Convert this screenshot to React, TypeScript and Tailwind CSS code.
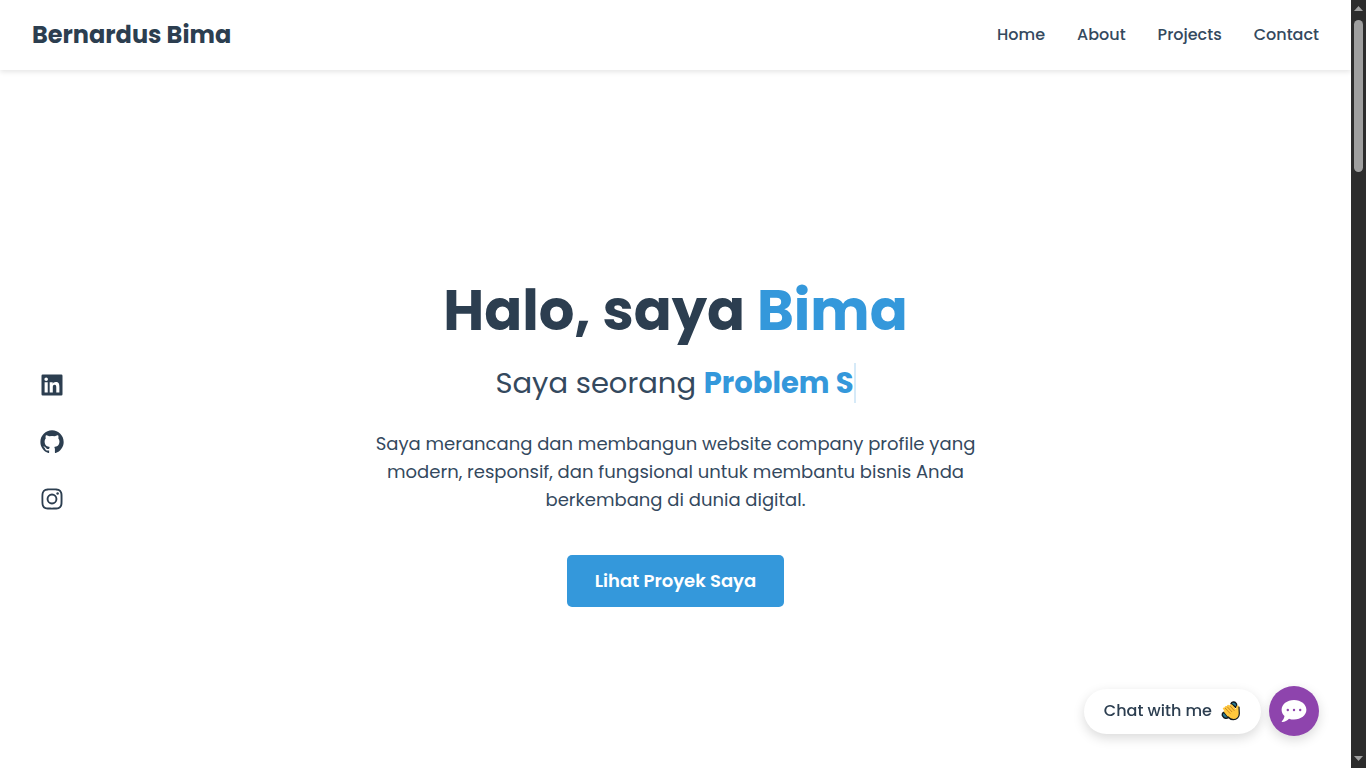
import { BiLogoGithub, BiLogoInstagram, BiLogoLinkedinSquare } from "react-icons/bi";

const navLinks = [
  { label: "Home", href: "#home" },
  { label: "About", href: "#about" },
  { label: "Projects", href: "#projects" },
  { label: "Contact", href: "#contact" },
];

const socials = [
  { label: "LinkedIn", href: "#linkedin", Icon: BiLogoLinkedinSquare },
  { label: "GitHub", href: "#github", Icon: BiLogoGithub },
  { label: "Instagram", href: "#instagram", Icon: BiLogoInstagram },
];

function Header() {
  return (
    <header className="flex h-[70px] items-center justify-between bg-white px-8 shadow-[0_2px_5px_rgba(0,0,0,0.1)]">
      <a href="#home" className="text-2xl font-bold text-[#2c3e50]">
        Bernardus Bima
      </a>
      <nav className="flex gap-8 text-base font-medium text-[#34495e]">
        {navLinks.map((link) => (
          <a key={link.label} href={link.href}>
            {link.label}
          </a>
        ))}
      </nav>
    </header>
  );
}

function SocialLinks() {
  return (
    <ul className="flex flex-col gap-[29px] pl-[38px] text-[#2c3e50]">
      {socials.map(({ label, href, Icon }) => (
        <li key={label}>
          <a href={href} aria-label={label} className="block w-7">
            <Icon size={28} />
          </a>
        </li>
      ))}
    </ul>
  );
}

function Hero() {
  return (
    <section className="flex max-w-[600px] flex-col items-center text-center">
      <h1 className="text-[56px] leading-[68px] font-bold text-[#2c3e50]">
        Halo, saya <span className="text-[#3498db]">Bima</span>
      </h1>
      <p className="mt-[18px] flex text-[29px] leading-10 whitespace-pre text-[#34495e]">
        Saya seorang{" "}
        <span className="border-r-2 border-[#d6eaf8] font-bold text-[#3498db]">Problem S</span>
      </p>
      <p className="mt-[27px] text-lg leading-7 text-[#34495e]">
        Saya merancang dan membangun website company profile yang modern, responsif, dan
        fungsional untuk membantu bisnis Anda berkembang di dunia digital.
      </p>
      <a
        href="#projects"
        className="mt-[41px] flex h-[52px] items-center rounded-[5px] bg-[#3498db] px-7 text-lg font-semibold text-white"
      >
        Lihat Proyek Saya
      </a>
    </section>
  );
}

function WavingHand() {
  return (
    <svg width="20" height="20" viewBox="0 0 20 20" aria-hidden="true">
      <path
        d="M10 2.6C10.6 .6 13.6 .4 14.8 2C16.2 3.2 15.8 5.4 14.6 6.4ZM3.2 11.2C1.2 11.6 .6 14 2 15.4C3 17.4 5.6 17.8 7.4 16.6Z"
        fill="#287a91"
        stroke="#111a20"
        strokeWidth="1.4"
        strokeLinejoin="round"
      />
      <path
        d="M2 8.2C1.4 7 2.7 6 3.7 6.8L4.1 7.1C3 5.6 4.7 4.2 5.9 5.4L6.4 5.9C5.2 4.3 7 2.8 8.3 4.2L9.1 5C8.5 3.6 10.1 2.6 11.2 3.8L15 8.2L15.4 5.8C15.7 4 18 4.2 18 6L18.3 12.5C18.4 16 15.8 18.7 12.4 18.7C10.3 18.7 8.6 17.8 7.1 16L3 11.1C2.3 10.2 2.6 9.3 3.4 9.2Z"
        fill="#ffc83d"
      />
      <path
        d="M18 6L18.3 12.5C18.4 16 15.8 18.7 12.4 18.7C10.3 18.7 8.6 17.8 7.1 16"
        fill="none"
        stroke="#111a20"
        strokeWidth="1.2"
        strokeLinecap="round"
      />
      <path
        d="M4.1 7.1L9 12.4M6.4 5.9L10.8 10.7M9.1 5L13.1 9.5"
        fill="none"
        stroke="#bd7821"
        strokeWidth="0.8"
        strokeLinecap="round"
      />
    </svg>
  );
}

function ChatBubble() {
  return (
    <svg width="26" height="24" viewBox="0 0 26 24" aria-hidden="true">
      <path
        d="M13 1C6.1 1 .6 5.4 .6 10.8C.6 13.2 1.7 15.4 3.5 17.1C3.1 19.4 1.9 21.4 .8 22.4C.5 22.8 .7 23.1 1.1 23.1C4 23 6.3 21.5 8 19.7C9.5 20.3 11.2 20.6 13 20.6C19.9 20.6 25.4 16.2 25.4 10.8C25.4 5.4 19.9 1 13 1Z"
        fill="currentColor"
      />
      <g fill="#8e44ad">
        <circle cx="6.8" cy="11" r="1.2" />
        <circle cx="13" cy="11" r="1.2" />
        <circle cx="19.2" cy="11" r="1.2" />
      </g>
    </svg>
  );
}

function ChatWidget() {
  return (
    <div className="fixed right-[47px] bottom-8 flex items-center gap-2">
      <span className="flex h-[45px] items-center gap-[9px] rounded-full bg-white px-5 text-base font-medium text-[#2c3e50] shadow-[0_4px_12px_rgba(0,0,0,0.15)]">
        Chat with me
        <WavingHand />
      </span>
      <button
        type="button"
        aria-label="Open chat"
        className="flex size-[50px] items-center justify-center rounded-full bg-[#8e44ad] text-white shadow-[0_4px_12px_rgba(0,0,0,0.15)]"
      >
        <ChatBubble />
      </button>
    </div>
  );
}

function ScrollTrack() {
  return (
    <div aria-hidden="true" className="flex w-[15px] shrink-0 flex-col items-center bg-[#2c2c2c]">
      <svg width="15" height="20" viewBox="0 0 15 20">
        <path d="M3 11L7.5 6L12 11Z" fill="#9f9f9f" />
      </svg>
      <div className="h-[152px] w-[9px] rounded-full bg-[#9f9f9f]" />
      <svg width="15" height="20" viewBox="0 0 15 20" className="mt-auto">
        <path d="M3 8L7.5 13L12 8Z" fill="#9f9f9f" />
      </svg>
    </div>
  );
}

export default function App() {
  return (
    <div className="flex min-h-screen bg-white font-['Poppins','Inter',sans-serif]">
      <div className="flex min-w-0 flex-1 flex-col">
        <Header />
        <main className="grid flex-1 grid-cols-[1fr_auto_1fr] items-center pt-[46px]">
          <SocialLinks />
          <Hero />
        </main>
      </div>
      <ScrollTrack />
      <ChatWidget />
    </div>
  );
}
